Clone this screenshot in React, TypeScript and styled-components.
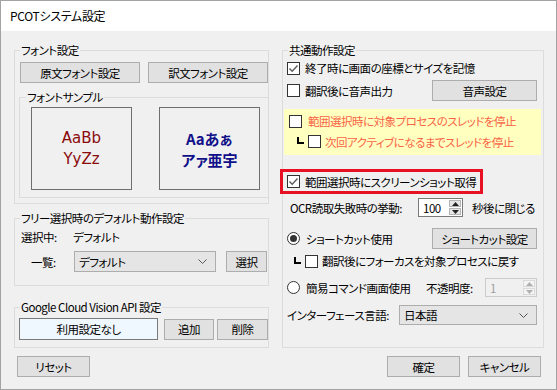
import React from 'react';
import styled, { createGlobalStyle } from 'styled-components';

const Global = createGlobalStyle`
  html, body { margin: 0; padding: 0; background: #f0f0f0; }
  body {
    font-family: "Noto Sans CJK JP", "Noto Sans", sans-serif;
    font-size: 11.5px;
    color: #000;
  }
  * { box-sizing: border-box; }
`;

const Window = styled.div`
  width: 557px;
  height: 390px;
  border: 1px solid #a3a3a3;
  background: #f0f0f0;
  display: flex;
  flex-direction: column;
  overflow: hidden;
  font-feature-settings: "palt" 1;
  letter-spacing: -0.5px;
  font-weight: 400;
`;

const TitleBar = styled.div`
  height: 30px;
  background: #fff;
  display: flex;
  align-items: center;
  padding-left: 9px;
  font-size: 12px;
  line-height: 16px;
  letter-spacing: -0.3px;
`;

const Body = styled.div`
  display: grid;
  grid-template-columns: 255px 262px;
  column-gap: 13px;
  padding: 11px 12px 0 13px;
`;

const Column = styled.div`
  display: flex;
  flex-direction: column;
`;

const Group = styled.fieldset<{ $mt?: number; $pl?: number; $pr?: number; $pt?: number; $pb?: number; $ml?: number; $w?: number }>`
  margin: ${p => p.$mt ?? 0}px 0 0 ${p => p.$ml ?? 0}px;
  padding: ${p => p.$pt ?? 0}px ${p => p.$pr ?? 0}px ${p => p.$pb ?? 0}px ${p => p.$pl ?? 5}px;
  border: 1px solid #dcdcdc;
  min-width: 0;
  ${p => (p.$w ? `width: ${p.$w}px;` : '')}
  display: flex;
  flex-direction: column;
`;

const Legend = styled.legend<{ $ml?: number }>`
  padding: 0 1px;
  margin-left: ${p => p.$ml ?? 0}px;
  line-height: 16px;
`;

const Button = styled.div<{ $w: number; $h?: number; $ml?: number; $mt?: number }>`
  width: ${p => p.$w}px;
  height: ${p => p.$h ?? 21}px;
  margin-left: ${p => p.$ml ?? 0}px;
  margin-top: ${p => p.$mt ?? 0}px;
  flex: none;
  background: #e1e1e1;
  border: 1px solid #adadad;
  display: flex;
  align-items: center;
  justify-content: center;
  line-height: 16px;
`;

const ButtonRow = styled.div<{ $gap?: number }>`
  display: flex;
  gap: ${p => p.$gap ?? 8}px;
`;

const SampleRow = styled.div`
  display: flex;
  gap: 27px;
  padding-left: 5px;
`;

const SampleBox = styled.div<{ $color: string; $bold?: boolean; $size: number; $font?: string }>`
  width: 101px;
  height: 83px;
  border: 1px solid #6e6e6e;
  display: flex;
  flex-direction: column;
  align-items: center;
  justify-content: center;
  text-align: center;
  color: ${p => p.$color};
  font-family: ${p => p.$font ?? '"Noto Sans CJK JP", sans-serif'};
  font-weight: ${p => (p.$bold ? 700 : 400)};
  font-size: ${p => p.$size}px;
  letter-spacing: 0;
  line-height: 21px;
`;

const SampleLine = styled.span`
  display: block;
  height: 21px;
`;

const Row = styled.div<{ $mt?: number; $h?: number; $pl?: number }>`
  display: flex;
  align-items: center;
  margin-top: ${p => p.$mt ?? 0}px;
  height: ${p => p.$h ?? 16}px;
  padding-left: ${p => p.$pl ?? 0}px;
  line-height: 16px;
  white-space: nowrap;
`;

const Label = styled.span<{ $w?: number; $pl?: number; $color?: string }>`
  ${p => (p.$w ? `width: ${p.$w}px; flex: none;` : '')}
  padding-left: ${p => p.$pl ?? 0}px;
  color: ${p => p.$color ?? 'inherit'};
`;

const Spacer = styled.div`
  flex: 1;
`;

const ComboBox = styled.div<{ $w: number; $h?: number }>`
  width: ${p => p.$w}px;
  height: ${p => p.$h ?? 21}px;
  flex: none;
  background: #e5e5e5;
  border: 1px solid #adadad;
  display: flex;
  align-items: center;
  padding: 0 8px 0 4px;
`;

const TextField = styled.div<{ $w: number }>`
  width: ${p => p.$w}px;
  height: 22px;
  flex: none;
  margin-left: -1px;
  background: #f0f8ff;
  border: 1px solid #7a7a7a;
  display: flex;
  align-items: center;
  justify-content: center;
`;

const SpinBox = styled.div<{ $w: number; $h: number; $disabled?: boolean }>`
  width: ${p => p.$w}px;
  height: ${p => p.$h}px;
  flex: none;
  display: flex;
  align-items: stretch;
  background: ${p => (p.$disabled ? '#f0f0f0' : '#fff')};
  border: 1px solid ${p => (p.$disabled ? '#cccccc' : '#7a7a7a')};
  color: ${p => (p.$disabled ? '#a0a0a0' : '#000')};
`;

const SpinValue = styled.div`
  flex: 1;
  display: flex;
  align-items: center;
  padding-left: 4px;
`;

const SpinButtons = styled.div`
  width: 14px;
  display: flex;
  flex-direction: column;
  padding: 1px;
  gap: 1px;
`;

const SpinHalf = styled.div<{ $disabled?: boolean }>`
  flex: 1;
  background: ${p => (p.$disabled ? '#f4f4f4' : '#e6e6e6')};
  border: 1px solid ${p => (p.$disabled ? '#dadada' : '#b4b4b4')};
  display: flex;
  align-items: center;
  justify-content: center;
`;

const Yellow = styled.div`
  margin: 8px -4px 0 -3px;
  height: 46px;
  background: #ffffc0;
  padding: 2px 0 0 5px;
  display: flex;
  flex-direction: column;
`;

const Highlight = styled.div`
  margin: 14px 0 0 -7px;
  width: 203px;
  height: 25px;
  border: 3px solid #e81123;
  display: flex;
  align-items: center;
  padding-left: 4px;
  white-space: nowrap;
`;

const BoxDraw = styled.span`
  width: 7px;
  height: 7px;
  flex: none;
  border-left: 2px solid #000;
  border-bottom: 2px solid #000;
  margin: 0 4px 2px 0;
`;

const CheckSquare = styled.span<{ $mr?: number }>`
  width: 13px;
  height: 13px;
  flex: none;
  border: 1px solid #333;
  background: #fff;
  margin-right: ${p => p.$mr ?? 5}px;
  display: flex;
  align-items: center;
  justify-content: center;
`;

const RadioCircle = styled.span`
  width: 13px;
  height: 13px;
  flex: none;
  border: 1px solid #333;
  border-radius: 50%;
  background: #fff;
  margin-right: 6px;
  display: flex;
  align-items: center;
  justify-content: center;
`;

const RadioDot = styled.span`
  width: 7px;
  height: 7px;
  border-radius: 50%;
  background: #333;
`;

const Footer = styled.div`
  grid-column: 1 / span 2;
  display: flex;
  align-items: center;
  margin-top: 8px;
  padding: 0 3px;
  gap: 8px;
`;

const Check: React.FC<{ checked?: boolean; mr?: number }> = ({ checked, mr }) => (
  <CheckSquare $mr={mr}>
    {checked && (
      <svg width="11" height="11" viewBox="0 0 11 11">
        <path d="M1.5 5.5 L4.2 8.3 L9.5 2.5" fill="none" stroke="#5c5c5c" strokeWidth="1.4" />
      </svg>
    )}
  </CheckSquare>
);

const Radio: React.FC<{ checked?: boolean }> = ({ checked }) => (
  <RadioCircle>{checked && <RadioDot />}</RadioCircle>
);

const Chevron: React.FC = () => (
  <svg width="9" height="5" viewBox="0 0 9 5">
    <path d="M0.5 0.5 L4.5 4.5 L8.5 0.5" fill="none" stroke="#555" strokeWidth="1" />
  </svg>
);

const Spin: React.FC<{ value: string; w: number; h: number; disabled?: boolean }> = ({ value, w, h, disabled }) => {
  const c = disabled ? '#b0b0b0' : '#222';
  return (
    <SpinBox $w={w} $h={h} $disabled={disabled}>
      <SpinValue>{value}</SpinValue>
      <SpinButtons>
        <SpinHalf $disabled={disabled}>
          <svg width="7" height="4" viewBox="0 0 7 4"><path d="M0 4 L3.5 0 L7 4 Z" fill={c} /></svg>
        </SpinHalf>
        <SpinHalf $disabled={disabled}>
          <svg width="7" height="4" viewBox="0 0 7 4"><path d="M0 0 L3.5 4 L7 0 Z" fill={c} /></svg>
        </SpinHalf>
      </SpinButtons>
    </SpinBox>
  );
};

const ORANGE = '#fa6446';

export default function App() {
  return (
    <>
      <Global />
      <Window>
        <TitleBar>PCOTシステム設定</TitleBar>
        <Body>
          <Column>
            <Group $pt={4} $pb={5}>
              <Legend>フォント設定</Legend>
              <ButtonRow>
                <Button $w={120}>原文フォント設定</Button>
                <Button $w={120}>訳文フォント設定</Button>
              </ButtonRow>
              <Group $mt={6} $ml={-1} $w={250} $pl={6} $pt={2} $pb={7}>
                <Legend>フォントサンプル</Legend>
                <SampleRow>
                  <SampleBox $color="#8b0a0a" $size={15} $font='"DejaVu Sans", sans-serif'>
                    <SampleLine>AaBb</SampleLine>
                    <SampleLine>YyZz</SampleLine>
                  </SampleBox>
                  <SampleBox $color="#10108a" $size={15} $bold>
                    <SampleLine>Aaあぁ</SampleLine>
                    <SampleLine>アァ亜宇</SampleLine>
                  </SampleBox>
                </SampleRow>
              </Group>
            </Group>

            <Group $mt={6} $pt={3} $pb={13}>
              <Legend>フリー選択時のデフォルト動作設定</Legend>
              <Row $pl={1}>
                <Label $w={52}>選択中:</Label>
                <Label>デフォルト</Label>
              </Row>
              <Row $mt={6} $h={21} $pl={1}>
                <Label $w={53} $pl={10}>一覧:</Label>
                <ComboBox $w={142}>
                  <span>デフォルト</span>
                  <Spacer />
                  <Chevron />
                </ComboBox>
                <Button $w={41} $ml={10}>選択</Button>
              </Row>
            </Group>

            <Group $mt={13} $pt={3} $pb={7}>
              <Legend>Google Cloud Vision API 設定</Legend>
              <Row $h={22}>
                <TextField $w={139}>利用設定なし</TextField>
                <Button $w={50} $ml={6} $h={21}>追加</Button>
                <Button $w={51} $ml={3} $h={21}>削除</Button>
              </Row>
            </Group>
          </Column>

          <Group $pl={4} $pr={6}>
            <Legend $ml={1}>共通動作設定</Legend>
            <Row $h={20}>
              <Check checked />
              <Label>終了時に画面の座標とサイズを記憶</Label>
            </Row>
            <Row $mt={2} $h={21}>
              <Check />
              <Label>翻訳後に音声出力</Label>
              <Spacer />
              <Button $w={105}>音声設定</Button>
            </Row>
            <Yellow>
              <Row $h={20}>
                <Check mr={6} />
                <Label $color={ORANGE}>範囲選択時に対象プロセスのスレッドを停止</Label>
              </Row>
              <Row $h={21} $pl={8}>
                <BoxDraw />
                <Check mr={4} />
                <Label $color={ORANGE}>次回アクティブになるまでスレッドを停止</Label>
              </Row>
            </Yellow>
            <Highlight>
              <Check checked />
              <Label>範囲選択時にスクリーンショット取得</Label>
            </Highlight>
            <Row $mt={4} $h={19} $pl={3}>
              <Label $w={128}>OCR読取失敗時の挙動:</Label>
              <Spin value="100" w={45} h={19} />
              <Label $pl={9}>秒後に閉じる</Label>
            </Row>
            <Row $mt={11} $h={21} $pl={-1}>
              <Radio checked />
              <Label>ショートカット使用</Label>
              <Spacer />
              <Button $w={105}>ショートカット設定</Button>
            </Row>
            <Row $mt={3} $h={18} $pl={7}>
              <BoxDraw />
              <Check mr={4} />
              <Label>翻訳後にフォーカスを対象プロセスに戻す</Label>
            </Row>
            <Row $mt={8} $h={19}>
              <Radio />
              <Label $w={120}>簡易コマンド画面使用</Label>
              <Label>不透明度:</Label>
              <Spacer />
              <Spin value="1" w={52} h={19} disabled />
            </Row>
            <Row $mt={8} $h={20}>
              <Label>インターフェース言語:</Label>
              <Spacer />
              <ComboBox $w={138} $h={20}>
                <span>日本語</span>
                <Spacer />
                <Chevron />
              </ComboBox>
            </Row>
          </Group>

          <Footer>
            <Button $w={73}>リセット</Button>
            <Spacer />
            <Button $w={73}>確定</Button>
            <Button $w={73}>キャンセル</Button>
          </Footer>
        </Body>
      </Window>
    </>
  );
}
